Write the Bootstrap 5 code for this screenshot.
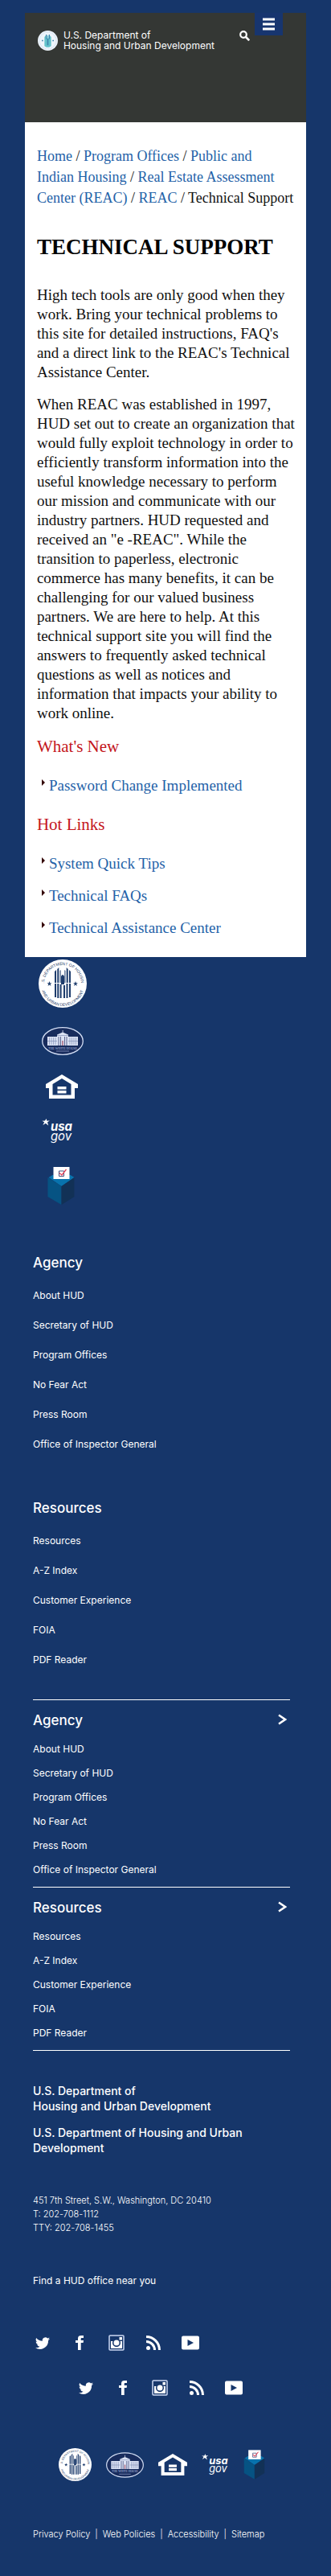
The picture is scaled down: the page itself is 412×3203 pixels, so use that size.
<!DOCTYPE html>
<html lang="en">
<head>
<meta charset="utf-8">
<meta name="viewport" content="width=device-width, initial-scale=1">
<title>Technical Support | HUD</title>
<link rel="stylesheet" href="https://cdn.jsdelivr.net/npm/bootstrap@5.3.0/dist/css/bootstrap.min.css">
<style>
:root { --navy: #16366a; --slate: #343734; }
body { background: var(--navy); color: #fff; font: 12px/18px Inter, "Open Sans", sans-serif; }
a { text-decoration: none; color: inherit; }
svg { display: block; flex: none; }
.shell { width: 85%; }
.masthead { background: var(--slate); min-height: 136px; padding-left: 16px; padding-right: 29px; }
.brand { margin-top: 21px; gap: 7px; line-height: 13px; font-size: 12px; }
.tool-search { margin-top: 21px; margin-right: 5px; width: 14px; height: 14px; }
.tool-menu { background: #17356f; width: 35px; height: 28px; }
.article { background: #fff; color: #111; font: 19px/24px "Liberation Serif", serif; padding: 29px 8px 24px 15px; }
.article a { color: #2462a8; }
.crumbs { font-size: 18px; line-height: 26px; }
.crumbs li { display: inline; }
.crumbs li + li::before { content: "/ "; color: #111; }
.article h1 { font-size: 27px; line-height: 30px; font-weight: 700; margin: 33px 0; color: #000; }
.article h2 { font-size: 21px; line-height: 20px; color: #c4161c; margin: 0; }
.article .intro { margin-bottom: 19px; }
.arrows { margin: 27px 0 26px; padding-left: 6px; }
.arrows:last-child { margin-bottom: 0; }
.arrows li + li { margin-top: 16px; }
.arrows svg { margin: 4px 5px 0 0; }
.logo-stack { padding: 3px 0 0 17px; }
.foot { width: 320px; max-width: 100%; margin-left: 41px; padding: 60px 0 40px; }
.foot h2 { font-size: 17px; line-height: 24px; font-weight: 500; margin: 0; }
.loose { margin: 20px 0 58px; }
.loose li { line-height: 18px; margin-bottom: 19px; }
.loose-last { margin-bottom: 40px; }
.fold { border-top: 1px solid #fff; padding-top: 13px; }
.fold button { color: #fff; background: none; border: 0; padding: 0; width: 100%; text-align: left; font-weight: inherit; }
.fold ul { margin: 15px 0 0; }
.fold li { line-height: 18px; padding-bottom: 12px; }
.dept { font-size: 14px; line-height: 19px; font-weight: 500; margin: 40px 0 48px; }
.dept p { margin: 0 0 14px; }
.fine { font-size: 11px; line-height: 17px; font-weight: 300; }
.social { gap: 22px; }
.social svg { width: 24px; height: 24px; }
.partners { gap: 18px; padding: 63px 0 58px; }
.legal a + a::before { content: "|"; margin: 0 6px; }
</style>
</head>
<body>
<svg width="0" height="0" class="position-absolute" aria-hidden="true">
  <defs>
    <path id="arc-top" d="M7 30a23 23 0 0 1 46 0"/>
    <path id="arc-low" d="M3 31a27 27 0 0 0 54 0"/>
    <symbol id="seal" viewBox="0 0 60 60">
      <circle cx="30" cy="30" r="30" fill="#fff"/>
      <g fill="#274069" font-family="Liberation Sans, sans-serif" font-size="5">
        <text><textPath href="#arc-top" startOffset="50%" text-anchor="middle">U.S. DEPARTMENT OF HOUSING</textPath></text>
        <text><textPath href="#arc-low" startOffset="50%" text-anchor="middle">AND URBAN DEVELOPMENT</textPath></text>
      </g>
      <path fill="#1d3c6c" d="M20 15l2-2v16h-2zM23.300 12l2-2v19h-2zM26.600 14l1-1v16h-1zM32.400 13l1 1v15h-1zM34.700 10l2 2v17h-2zM38 13l2 2v14h-2zM28 21q2-4 4 0v10h-4zM20 30h2v17h-2zM23.300 30h2v18h-2zM26.600 31h2v17h-2zM31 32h2v16h-2zM34.500 30h2v18h-2zM38 30h2v17h-2zM13.500 27l.8 2.200h2.200l-1.800 1.400.7 2.300-1.900-1.400-1.900 1.400.7-2.300-1.800-1.400h2.200zM46 27l.8 2.200h2.200l-1.800 1.400.7 2.300-1.900-1.400-1.900 1.400.7-2.300-1.800-1.400h2.200z"/>
    </symbol>
    <symbol id="seal-mini" viewBox="0 0 60 60">
      <circle cx="30" cy="30" r="30" fill="#eef5fb"/>
      <circle cx="30" cy="30" r="25" fill="none" stroke="#d2dff0" stroke-width="3" stroke-dasharray="3 2"/>
      <path fill="#63c3cb" d="M20 19l5-5v9h3v-8h4v8h3v-9l5 5v27l-6 4H26l-6-4z"/>
      <path fill="#3e84ad" d="M24 12h3v13h-3zM33 12h3v13h-3zM28 24h4v20h-4zM12 28h4v4h-4zM44 28h4v4h-4z"/>
    </symbol>
    <symbol id="whitehouse" viewBox="0 0 52 35">
      <ellipse cx="26" cy="17.500" rx="25.300" ry="16.800" fill="#182c5d" stroke="#d3def5" stroke-width="1.300"/>
      <path fill="#dbe2f4" d="M7 12h12V9.500l7-3 7 3V12h12v11H7zM25.700 4h.8v3h-.8z"/>
      <path stroke="#8290b8" stroke-width=".7" fill="none" d="M9.500 13v9M12 13v9M14.500 13v9M17 13v9M35 13v9M37.500 13v9M40 13v9M42.500 13v9M7 17.500h12M33 17.500h12M19 10.500h14"/>
      <path stroke="#5d6590" fill="none" d="M21 12v11M23.500 12v11M28.500 12v11M31 12v11"/>
      <path fill="#a95f75" d="M25.300 17h1.400v6h-1.400z"/>
      <text x="26" y="27.500" font-size="4" text-anchor="middle" fill="#b9c5e4" font-family="Liberation Serif, serif">THE WHITE HOUSE</text>
      <path stroke="#8d9bc4" stroke-width=".8" d="M18 30h16"/>
    </symbol>
    <symbol id="equal" viewBox="0 0 40 30">
      <path fill="#fff" fill-rule="evenodd" d="M20 0l20 12v5h-4v13H4V17H0v-5zM20 5L8.500 12v13.500h23V12z"/>
      <path fill="#fff" d="M14.500 15h11v3.500h-11zM14.500 20h11v3.500h-11z"/>
    </symbol>
    <symbol id="usagov" viewBox="0 0 37 31">
      <path fill="#fff" d="M5 1l.8 2.600L9 3 6.300 5.200 7.500 9 4.200 6.300 1 8.500l1.700-3.600L0 3.600l3.500-.2z"/>
      <g fill="#fff" font-family="Inter, sans-serif" font-style="italic" font-size="14">
        <text x="10" y="15" font-weight="700">usa</text>
        <text x="10" y="26">gov</text>
      </g>
    </symbol>
    <symbol id="ballot" viewBox="0 0 35 47">
      <path fill="#0873ad" d="M2 13L7 10h22l5 3-16 11z"/>
      <path fill="#065383" d="M1 13l17 11v23L1 37z"/>
      <path fill="#123156" d="M34 13L18 24v23l16-10z"/>
      <path fill="#fff" d="M8 0h20v15H8z"/>
      <path fill="none" stroke="#47517c" d="M15 5h6v6.500h-6z"/>
      <path fill="none" stroke="#e3455c" stroke-width="1.300" d="M15.500 7.500l3 2.500 5.500-7"/>
    </symbol>
    <symbol id="twitter" viewBox="0 0 24 24"><path fill="#fff" d="M21 5.900a7 7 0 0 1-2.100.6 3.700 3.700 0 0 0 1.600-2 7.400 7.400 0 0 1-2.300.9 3.700 3.700 0 0 0-6.300 3.400A10.500 10.500 0 0 1 4.200 4.900a3.700 3.700 0 0 0 1.200 4.900 3.700 3.700 0 0 1-1.700-.4c0 1.800 1.200 3.300 3 3.700a3.700 3.700 0 0 1-1.700 0 3.700 3.700 0 0 0 3.500 2.600A7.400 7.400 0 0 1 3 17.300a10.500 10.500 0 0 0 16.100-9.300 7.500 7.500 0 0 0 1.900-2.100z" transform="translate(0 1)"/></symbol>
    <symbol id="facebook" viewBox="0 0 24 24"><path fill="#fff" d="M10 21v-9H7V9h3V6.700C10 4 11.500 3 14 3h3v3h-2c-1 0-1.300.4-1.300 1.300V9H17l-.4 3h-2.900v9z"/></symbol>
    <symbol id="instagram" viewBox="0 0 24 24"><rect x="3" y="3" width="18" height="18" rx="1" fill="none" stroke="#cbd8f2" stroke-width="1.500"/><path fill="#fff" d="M5 10h2.500a5 5 0 1 0 9 0H19v9H5zM15.500 5H19v3.500h-3.500z"/><circle cx="12" cy="12" r="3.500" fill="#fff"/></symbol>
    <symbol id="rss" viewBox="0 0 24 24"><circle cx="5.500" cy="18.500" r="2.500" fill="#fff"/><path fill="none" stroke="#fff" stroke-width="3" d="M3 10.500A10.500 10.500 0 0 1 13.500 21M3 4.500A16.500 16.500 0 0 1 19.500 21"/></symbol>
    <symbol id="youtube" viewBox="0 0 24 24"><path fill="#fff" fill-rule="evenodd" d="M3 3.500h18a2 2 0 0 1 2 2v13a2 2 0 0 1-2 2H3a2 2 0 0 1-2-2v-13a2 2 0 0 1 2-2zM8.500 8v8l7.500-4z"/></symbol>
    <symbol id="tri" viewBox="0 0 4 8"><path fill="#300" d="M0 0l4 4-4 4z"/></symbol>
    <symbol id="chevron" viewBox="0 0 11 14"><path fill="none" stroke="#fff" stroke-width="2.500" d="M1 1.500L9 7l-8 5.500"/></symbol>
  </defs>
</svg>

<div class="shell mx-auto pt-3">
  <header class="masthead d-flex align-items-start">
    <a href="#" class="brand d-flex align-items-center me-auto">
      <svg width="25" height="25" aria-hidden="true"><use href="#seal-mini"/></svg>
      <span>U.S. Department of<br>Housing and Urban Development</span>
    </a>
    <button class="tool-search btn p-0 border-0" aria-label="Search">
      <svg width="13" height="13" viewBox="0 0 13 13"><circle cx="5" cy="5" r="3.800" fill="none" stroke="#fff" stroke-width="2.200"/><path stroke="#fff" stroke-width="2.600" d="M8 8l4.200 4.200"/></svg>
    </button>
    <button class="tool-menu btn p-0 border-0 rounded-0 d-flex align-items-center justify-content-center" aria-label="Menu">
      <svg width="15" height="16" viewBox="0 0 15 16"><path stroke="#fff" stroke-width="3" d="M0 2h15M0 8h15M0 14h15"/></svg>
    </button>
  </header>

  <main class="article">
    <nav aria-label="Breadcrumb">
      <ol class="crumbs list-unstyled m-0">
        <li><a href="#">Home</a></li>
        <li><a href="#">Program Offices</a></li>
        <li><a href="#">Public and <br class="d-sm-none">Indian Housing</a></li>
        <li><a href="#">Real Estate Assessment <br class="d-sm-none">Center (REAC)</a></li>
        <li><a href="#">REAC</a></li>
        <li aria-current="page">Technical Support</li>
      </ol>
    </nav>
    <h1>TECHNICAL SUPPORT</h1>
    <p>High tech tools are only good when they <br class="d-sm-none">work. Bring your technical problems to <br class="d-sm-none">this site for detailed instructions, FAQ's <br class="d-sm-none">and a direct link to the REAC's Technical <br class="d-sm-none">Assistance Center.</p>
    <p class="intro">When REAC was established in 1997, <br class="d-sm-none">HUD set out to create an organization that <br class="d-sm-none">would fully exploit technology in order to <br class="d-sm-none">efficiently transform information into the <br class="d-sm-none">useful knowledge necessary to perform <br class="d-sm-none">our mission and communicate with our <br class="d-sm-none">industry partners. HUD requested and <br class="d-sm-none">received an "e -REAC". While the <br class="d-sm-none">transition to paperless, electronic <br class="d-sm-none">commerce has many benefits, it can be <br class="d-sm-none">challenging for our valued business <br class="d-sm-none">partners. We are here to help. At this <br class="d-sm-none">technical support site you will find the <br class="d-sm-none">answers to frequently asked technical <br class="d-sm-none">questions as well as notices and <br class="d-sm-none">information that impacts your ability to <br class="d-sm-none">work online.</p>
    <h2>What's New</h2>
    <ul class="arrows list-unstyled">
      <li class="d-flex"><svg width="4" height="8"><use href="#tri"/></svg><a href="#">Password Change Implemented</a></li>
    </ul>
    <h2>Hot Links</h2>
    <ul class="arrows list-unstyled">
      <li class="d-flex"><svg width="4" height="8"><use href="#tri"/></svg><a href="#">System Quick Tips</a></li>
      <li class="d-flex"><svg width="4" height="8"><use href="#tri"/></svg><a href="#">Technical FAQs</a></li>
      <li class="d-flex"><svg width="4" height="8"><use href="#tri"/></svg><a href="#">Technical Assistance Center</a></li>
    </ul>
  </main>

  <div class="logo-stack d-flex flex-column align-items-start gap-4">
    <a href="#" aria-label="HUD"><svg width="60" height="60"><use href="#seal"/></svg></a>
    <a href="#" aria-label="The White House" class="ps-1"><svg width="52" height="35"><use href="#whitehouse"/></svg></a>
    <a href="#" aria-label="Equal Housing" class="ps-2"><svg width="42" height="30"><use href="#equal"/></svg></a>
    <a href="#" aria-label="USA.gov" class="ps-1"><svg width="40" height="33"><use href="#usagov"/></svg></a>
    <a href="#" aria-label="Vote.gov" class="ps-2 pt-1"><svg width="40" height="47"><use href="#ballot"/></svg></a>
  </div>
</div>

<footer class="foot">
  <section>
    <h2>Agency</h2>
    <ul class="loose list-unstyled">
      <li><a href="#">About HUD</a></li>
      <li><a href="#">Secretary of HUD</a></li>
      <li><a href="#">Program Offices</a></li>
      <li><a href="#">No Fear Act</a></li>
      <li><a href="#">Press Room</a></li>
      <li><a href="#">Office of Inspector General</a></li>
    </ul>
  </section>
  <section>
    <h2>Resources</h2>
    <ul class="loose loose-last list-unstyled">
      <li><a href="#">Resources</a></li>
      <li><a href="#">A-Z Index</a></li>
      <li><a href="#">Customer Experience</a></li>
      <li><a href="#">FOIA</a></li>
      <li><a href="#">PDF Reader</a></li>
    </ul>
  </section>

  <section class="fold">
    <h2><button class="d-flex justify-content-between" aria-expanded="true">Agency <svg class="mt-1 me-1" width="11" height="14"><use href="#chevron"/></svg></button></h2>
    <ul class="list-unstyled">
      <li><a href="#">About HUD</a></li>
      <li><a href="#">Secretary of HUD</a></li>
      <li><a href="#">Program Offices</a></li>
      <li><a href="#">No Fear Act</a></li>
      <li><a href="#">Press Room</a></li>
      <li><a href="#">Office of Inspector General</a></li>
    </ul>
  </section>
  <section class="fold border-bottom border-white">
    <h2><button class="d-flex justify-content-between" aria-expanded="true">Resources <svg class="mt-1 me-1" width="11" height="14"><use href="#chevron"/></svg></button></h2>
    <ul class="list-unstyled">
      <li><a href="#">Resources</a></li>
      <li><a href="#">A-Z Index</a></li>
      <li><a href="#">Customer Experience</a></li>
      <li><a href="#">FOIA</a></li>
      <li><a href="#">PDF Reader</a></li>
    </ul>
  </section>

  <div class="dept">
    <p>U.S. Department of<br>Housing and Urban Development</p>
    <p class="mb-0">U.S. Department of Housing and Urban <br class="d-sm-none">Development</p>
  </div>
  <address class="fine mb-5">451 7th Street, S.W., Washington, DC 20410<br>T: 202-708-1112<br>TTY: 202-708-1455</address>
  <p class="mb-5 pb-2"><a href="#">Find a HUD office near you</a></p>

  <div class="social d-flex mb-3 pb-3">
    <a href="#" aria-label="Twitter"><svg><use href="#twitter"/></svg></a>
    <a href="#" aria-label="Facebook"><svg><use href="#facebook"/></svg></a>
    <a href="#" aria-label="Instagram"><svg><use href="#instagram"/></svg></a>
    <a href="#" aria-label="RSS"><svg><use href="#rss"/></svg></a>
    <a href="#" aria-label="YouTube"><svg><use href="#youtube"/></svg></a>
  </div>
  <div class="social d-flex justify-content-center pe-1">
    <a href="#" aria-label="Twitter"><svg><use href="#twitter"/></svg></a>
    <a href="#" aria-label="Facebook"><svg><use href="#facebook"/></svg></a>
    <a href="#" aria-label="Instagram"><svg><use href="#instagram"/></svg></a>
    <a href="#" aria-label="RSS"><svg><use href="#rss"/></svg></a>
    <a href="#" aria-label="YouTube"><svg><use href="#youtube"/></svg></a>
  </div>

  <div class="partners d-flex justify-content-center align-items-center">
    <a href="#" aria-label="HUD"><svg width="41" height="41"><use href="#seal"/></svg></a>
    <a href="#" aria-label="The White House"><svg width="47" height="32"><use href="#whitehouse"/></svg></a>
    <a href="#" aria-label="Equal Housing"><svg width="36" height="27"><use href="#equal"/></svg></a>
    <a href="#" aria-label="USA.gov"><svg width="34" height="29"><use href="#usagov"/></svg></a>
    <a href="#" aria-label="Vote.gov"><svg width="27" height="39"><use href="#ballot"/></svg></a>
  </div>
  <nav class="legal fine" aria-label="Policies"><a href="#">Privacy Policy</a><a href="#">Web Policies</a><a href="#">Accessibility</a><a href="#">Sitemap</a></nav>
</footer>
<script src="https://cdn.jsdelivr.net/npm/bootstrap@5.3.0/dist/js/bootstrap.bundle.min.js"></script>
</body>
</html>
